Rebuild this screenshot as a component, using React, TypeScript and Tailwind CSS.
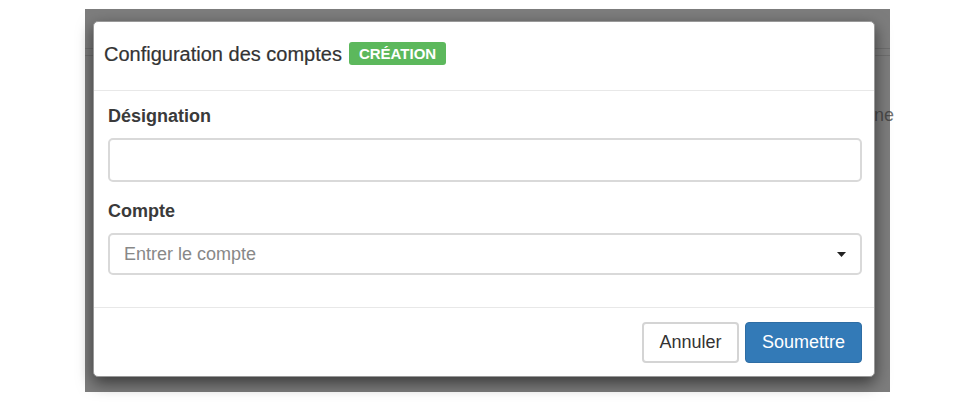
// Bootstrap-style modal "Configuration des comptes" over a dimmed page.

const FONT = "font-['Liberation_Sans',Arial,sans-serif]";

export default function App() {
  return (
    <div className={`h-[410px] w-[976px] overflow-hidden bg-white pl-[85px] pt-[9px] ${FONT}`}>
      <Backdrop />
    </div>
  );
}

function Backdrop() {
  return (
    <div className="relative h-[383px] w-[805px] bg-[#7d7d7d] pl-[8px] pt-[12px]">
      {/* faint page lying behind the overlay */}
      <div className="absolute left-0 right-0 top-[39px] h-[8px] border-y border-[#6e6e6e]" />
      <span className="absolute right-[-4px] top-[93px] text-[18px] text-[#333]/70">ne</span>
      <Modal />
    </div>
  );
}

function Modal() {
  return (
    <div className="relative flex h-[356px] w-[782px] flex-col rounded-[5px] border border-[#999] bg-white shadow-[0_6px_16px_rgba(0,0,0,0.55)]">
      <div className="flex h-[69px] items-center gap-[7px] border-b border-[#e8e8e8] pb-[5px] pl-[10px]">
        <h4 className="text-[20px] leading-none text-[#333] [-webkit-text-stroke:0.2px_#333]">
          Configuration des comptes
        </h4>
        <span className="rounded-[3px] bg-[#5cb85c] px-[10px] py-[4px] text-[15px] font-bold leading-[15px] text-white">
          CRÉATION
        </span>
      </div>

      <div className="flex flex-1 flex-col pl-[14px] pr-[12px] pt-[14px]">
        <label className="text-[18px] font-bold leading-[22px] text-[#3a3a3a]">Désignation</label>
        <input
          className="mt-[11px] h-[44px] w-full rounded-[5px] border-2 border-[#d9d9d9] px-[14px] text-[18px] outline-none"
          type="text"
        />
        <label className="mt-[18px] text-[18px] font-bold leading-[22px] text-[#3a3a3a]">Compte</label>
        <div className="mt-[11px] flex h-[42px] items-center rounded-[5px] border-2 border-[#d9d9d9] pl-[14px] pr-[14px]">
          <span className="flex-1 text-[18px] text-[#888]">Entrer le compte</span>
          <svg width="9" height="5" viewBox="0 0 9 5" className="text-[#222]">
            <path d="M0 0h9L4.5 5z" fill="currentColor" />
          </svg>
        </div>
      </div>

      <div className="flex h-[69px] items-center justify-end gap-[6px] border-t border-[#e8e8e8] pr-[12px]">
        <button className="h-[41px] w-[97px] rounded-[4px] border-2 border-[#d4d4d4] bg-white text-[18px] text-[#333]">
          Annuler
        </button>
        <button className="h-[41px] w-[117px] rounded-[4px] border border-[#2e6da4] bg-[#337ab7] text-[18px] text-white">
          Soumettre
        </button>
      </div>
    </div>
  );
}
